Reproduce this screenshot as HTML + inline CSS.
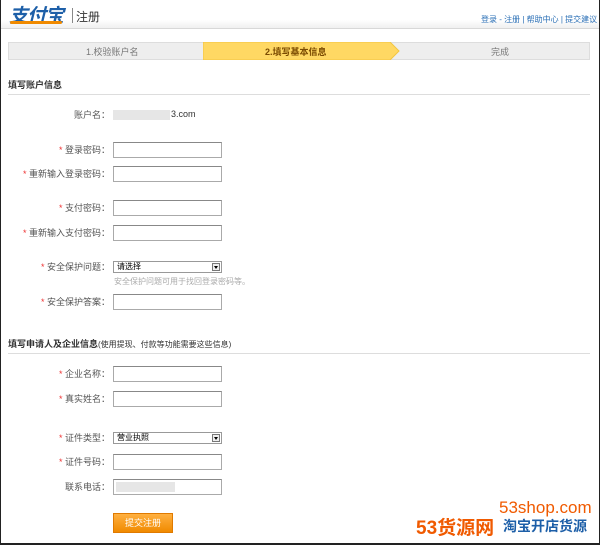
<!DOCTYPE html>
<html><head><meta charset="utf-8"><style>
*{margin:0;padding:0;box-sizing:border-box}
body{width:600px;height:545px;overflow:hidden;background:#fff;font-family:"Liberation Sans","Noto Sans CJK SC",sans-serif;font-size:9px;color:#555;position:relative}
.frame{position:absolute;left:0;top:0;width:600px;height:545px;border:1px solid #222;border-top:none;border-bottom:2px solid #222}
.a{position:absolute;white-space:nowrap}
.hdr{position:absolute;left:0;top:0;width:600px;height:29px;background:linear-gradient(#fff 70%,#f0f0f0);border-bottom:1px solid #d8d8d8}
.lbl{position:absolute;width:110px;text-align:right;font-size:9px;color:#555}
.lbl b{color:#e33;font-weight:normal}
.in{position:absolute;left:113px;width:109px;height:16px;border:1px solid #aaa;border-top-color:#888;background:#fff}
.sel{position:absolute;left:113px;width:109px;height:12px;border:1px solid #999;font-size:8px;color:#000;padding-left:3px;line-height:10px}
.sel i{position:absolute;right:1px;top:1px;width:8px;height:8px;border:1px solid #777;background:#eee}
.sel i:after{content:"";position:absolute;left:1px;top:2px;border:2px solid transparent;border-top:3px solid #000}
.sec{position:absolute;left:8px;width:582px;border-bottom:1px solid #ddd;font-weight:bold;color:#333;font-size:9px;padding-bottom:3px}
</style></head><body>
<div class="hdr"></div>
<div class="a" style="left:9px;top:1px;font-size:19px;font-weight:bold;color:#1d5fa8;font-style:italic;letter-spacing:-1px">支付宝</div>
<div class="a" style="left:10px;top:21px;width:52px;height:3px;background:#f08a00;border-radius:2px"></div>
<div class="a" style="left:72px;top:8px;width:1px;height:15px;background:#888"></div>
<div class="a" style="left:76px;top:8px;font-size:12px;color:#333">注册</div>
<div class="a" style="left:481px;top:14px;font-size:8px;color:#2a6fb6">登录 - 注册 | 帮助中心 | 提交建议</div>
<div class="a" style="left:8px;top:42px;width:582px;height:18px;background:#eee;border:1px solid #ddd"></div>
<div class="a" style="left:86px;top:45px;color:#777">1.校验账户名</div>
<svg class="a" style="left:203px;top:42px" width="197" height="18"><polygon points="0,0 187,0 196,9 187,18 0,18" fill="#ffd863" stroke="#f3c540"/></svg>
<div class="a" style="left:265px;top:45px;color:#7a4a00;font-weight:bold">2.填写基本信息</div>
<div class="a" style="left:491px;top:45px;color:#777">完成</div>
<div class="sec" style="top:78px">填写账户信息</div>
<div class="lbl" style="top:108px">账户名：</div>
<div class="a" style="left:113px;top:110px;width:57px;height:10px;background:#e6e6e6"></div>
<div class="a" style="left:171px;top:109px;color:#333">3.com</div>
<div class="lbl" style="top:143px"><b>*</b> 登录密码：</div><div class="in" style="top:142px"></div>
<div class="lbl" style="top:167px"><b>*</b> 重新输入登录密码：</div><div class="in" style="top:166px"></div>
<div class="lbl" style="top:201px"><b>*</b> 支付密码：</div><div class="in" style="top:200px"></div>
<div class="lbl" style="top:226px"><b>*</b> 重新输入支付密码：</div><div class="in" style="top:225px"></div>
<div class="lbl" style="top:260px"><b>*</b> 安全保护问题：</div><div class="sel" style="top:261px">请选择<i></i></div>
<div class="a" style="left:114px;top:276px;font-size:8px;color:#aaa">安全保护问题可用于找回登录密码等。</div>
<div class="lbl" style="top:295px"><b>*</b> 安全保护答案：</div><div class="in" style="top:294px"></div>
<div class="sec" style="top:337px">填写申请人及企业信息<span style="font-weight:normal;font-size:8px">(使用提现、付款等功能需要这些信息)</span></div>
<div class="lbl" style="top:367px"><b>*</b> 企业名称：</div><div class="in" style="top:366px"></div>
<div class="lbl" style="top:392px"><b>*</b> 真实姓名：</div><div class="in" style="top:391px"></div>
<div class="lbl" style="top:431px"><b>*</b> 证件类型：</div><div class="sel" style="top:432px">营业执照<i></i></div>
<div class="lbl" style="top:455px"><b>*</b> 证件号码：</div><div class="in" style="top:454px"></div>
<div class="lbl" style="top:480px">联系电话：</div><div class="in" style="top:479px"></div>
<div class="a" style="left:116px;top:482px;width:59px;height:10px;background:#e6e6e6"></div>
<div class="a" style="left:113px;top:513px;width:60px;height:20px;background:linear-gradient(#ffb040,#f08a00);border:1px solid #e07a00;color:#fff;text-align:center;line-height:18px;font-size:9px">提交注册</div>
<div class="a" style="left:499px;top:498px;font-size:17px;color:#f05a00">53shop.com</div>
<div class="a" style="left:416px;top:513px;font-size:19px;font-weight:bold;color:#f05a00">53货源网</div>
<div class="a" style="left:503px;top:516px;font-size:14px;font-weight:bold;color:#1d5fa8">淘宝开店货源</div>
<div class="frame"></div>
</body></html>
